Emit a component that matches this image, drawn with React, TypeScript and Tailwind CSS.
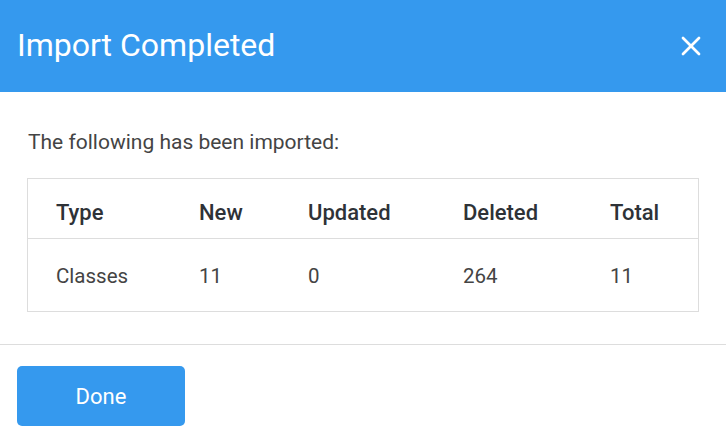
import { X } from 'lucide-react'

const rows = [{ type: 'Classes', created: 11, updated: 0, deleted: 264, total: 11 }]

export default function App() {
  return (
    <div className="w-[726px] h-[441px] bg-white font-['Roboto',sans-serif] overflow-hidden">
      {/* Header */}
      <div className="h-[92px] bg-[#3599ee] flex items-center justify-between pl-[17px] pr-[19px]">
        <h1 className="text-[32px] text-white leading-none pb-[2px]">Import Completed</h1>
        <X className="w-[32px] h-[32px] text-white" strokeWidth={2} />
      </div>

      {/* Body */}
      <div className="px-[27px] pt-[38px] pb-[32px]">
        <p className="text-[21px] text-[#444] leading-[24px] pl-px">The following has been imported:</p>
        <div className="mt-[24px] w-[672px] border border-[#dddddd]">
          <div className="grid grid-cols-[143px_109px_155px_147px_1fr] h-[60px] items-center border-b border-[#dddddd] pl-[28px] pt-[7px] text-[22px] font-medium text-[#2e3237]">
            <span>Type</span>
            <span>New</span>
            <span>Updated</span>
            <span>Deleted</span>
            <span>Total</span>
          </div>
          {rows.map((r) => (
            <div
              key={r.type}
              className="grid grid-cols-[143px_109px_155px_147px_1fr] h-[72px] items-center pl-[28px] pt-[2px] text-[20.5px] text-[#444]"
            >
              <span>{r.type}</span>
              <span>{r.created}</span>
              <span>{r.updated}</span>
              <span>{r.deleted}</span>
              <span>{r.total}</span>
            </div>
          ))}
        </div>
      </div>

      {/* Footer */}
      <div className="border-t border-[#dddddd] pt-[21px] px-[17px]">
        <button className="w-[168px] h-[60px] rounded-[5px] bg-[#3599ee] text-white text-[22px]">Done</button>
      </div>
    </div>
  )
}
